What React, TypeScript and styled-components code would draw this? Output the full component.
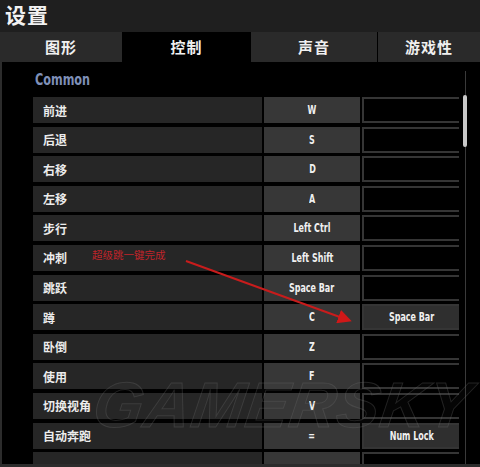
import React from 'react';
import styled, { createGlobalStyle } from 'styled-components';

const GlobalStyle = createGlobalStyle`
  html, body {
    margin: 0;
    padding: 0;
    background: #000;
  }
  * {
    box-sizing: border-box;
  }
`;

const CJK = `"Noto Sans CJK SC", "Noto Sans", sans-serif`;
const COND = `"DejaVu Sans Condensed", "DejaVu Sans", "Liberation Sans", sans-serif`;

const Window = styled.div`
  width: 480px;
  height: 467px;
  display: flex;
  flex-direction: column;
  background: #000;
  overflow: hidden;
`;

const TitleBar = styled.div`
  height: 32px;
  background: #1f1f1f;
  display: flex;
  align-items: center;
  padding: 0 0 5px 5px;
`;

const Title = styled.h1`
  margin: 0;
  font-family: ${CJK};
  font-weight: 700;
  font-size: 21px;
  color: #f2f2f2;
  letter-spacing: 1px;
`;

const TabBar = styled.div`
  height: 30px;
  display: grid;
  grid-template-columns: 122px 127px 126px 1fr;
  column-gap: 1px;
  background: #000;
`;

const Tab = styled.div<{ $active?: boolean }>`
  display: flex;
  align-items: center;
  justify-content: center;
  background: ${(p) => (p.$active ? '#000' : '#2a2a2a')};
  color: #f0f0f0;
  font-family: ${CJK};
  font-weight: 700;
  font-size: 15px;
  letter-spacing: 1px;
  padding-bottom: 2px;
`;

const Content = styled.div`
  position: relative;
  flex: 1;
  display: flex;
  flex-direction: column;
  border-left: 2px solid #2c2c2c;
  border-bottom: 3px solid #2c2c2c;
  padding-left: 31px;
  overflow: hidden;
`;

const SectionTitle = styled.div`
  height: 35px;
  display: flex;
  align-items: center;
  padding-left: 2px;
  padding-bottom: 1px;
`;

const Condensed = styled.span<{ $scale?: number }>`
  display: inline-block;
  font-family: ${COND};
  font-stretch: condensed;
  font-weight: 700;
  transform: scaleX(${(p) => p.$scale ?? 0.74});
  transform-origin: center;
  white-space: nowrap;
`;

const SectionText = styled(Condensed)`
  font-size: 16px;
  color: #7f90b8;
  transform-origin: left center;
`;

const Body = styled.div`
  flex: 1;
  display: flex;
  gap: 4px;
  min-height: 0;
`;

const List = styled.div`
  width: 426px;
  display: flex;
  flex-direction: column;
  gap: 3.6px;
  overflow: hidden;
`;

const Row = styled.div`
  flex: 0 0 26px;
  display: grid;
  grid-template-columns: 229px 96px 99px;
  column-gap: 2px;
`;

const Label = styled.div`
  background: #262626;
  display: flex;
  align-items: center;
  padding-left: 10px;
  font-family: ${CJK};
  font-weight: 700;
  font-size: 12px;
  color: #ececec;
`;

const Key = styled.div<{ $empty?: boolean; $framed?: boolean }>`
  display: flex;
  align-items: center;
  justify-content: center;
  background: ${(p) => (p.$empty ? '#000' : p.$framed ? '#2f2f2f' : '#373737')};
  border: ${(p) => (p.$framed ? '2px solid #353535' : 'none')};
  color: #f0f0f0;
  font-size: 12px;
`;

const ScrollTrack = styled.div`
  position: relative;
  width: 4px;
  margin-top: -26px;
  display: flex;
  justify-content: center;
  &::before {
    content: '';
    width: 1px;
    height: 100%;
    background: #3a3a3a;
  }
`;

const ScrollThumb = styled.div`
  position: absolute;
  top: 24px;
  left: 0;
  width: 4px;
  height: 52px;
  border-radius: 2px;
  background: #c9c9c9;
`;

const Overlay = styled.svg`
  position: absolute;
  left: 0;
  top: 0;
  pointer-events: none;
`;

const Note = styled.div`
  position: absolute;
  left: 90px;
  top: 185px;
  font-family: ${CJK};
  font-size: 10.5px;
  color: #c0242a;
`;

const Watermark = styled.div`
  position: absolute;
  left: 92px;
  top: 306px;
  font-family: "Liberation Sans", sans-serif;
  font-weight: 700;
  font-style: italic;
  font-size: 64px;
  letter-spacing: 1px;
  color: rgba(255, 255, 255, 0.02);
  -webkit-text-stroke: 1px rgba(110, 110, 110, 0.3);
  transform: skewX(-8deg);
  pointer-events: none;
`;

const rows: { label: string; key: string; alt?: string }[] = [
  { label: '前进', key: 'W' },
  { label: '后退', key: 'S' },
  { label: '右移', key: 'D' },
  { label: '左移', key: 'A' },
  { label: '步行', key: 'Left Ctrl' },
  { label: '冲刺', key: 'Left Shift' },
  { label: '跳跃', key: 'Space Bar' },
  { label: '蹲', key: 'C', alt: 'Space Bar' },
  { label: '卧倒', key: 'Z' },
  { label: '使用', key: 'F' },
  { label: '切换视角', key: 'V' },
  { label: '自动奔跑', key: '=', alt: 'Num Lock' },
  { label: '', key: '' },
];

const tabs = ['图形', '控制', '声音', '游戏性'];

export default function App() {
  return (
    <>
      <GlobalStyle />
      <Window>
        <TitleBar>
          <Title>设置</Title>
        </TitleBar>
        <TabBar>
          {tabs.map((t, i) => (
            <Tab key={t} $active={i === 1}>
              {t}
            </Tab>
          ))}
        </TabBar>
        <Content>
          <SectionTitle>
            <SectionText $scale={0.78}>Common</SectionText>
          </SectionTitle>
          <Body>
            <List>
              {rows.map((r, i) => (
                <Row key={i}>
                  <Label>{r.label}</Label>
                  <Key>{r.key && <Condensed>{r.key}</Condensed>}</Key>
                  <Key $framed $empty={!r.alt}>
                    {r.alt && <Condensed>{r.alt}</Condensed>}
                  </Key>
                </Row>
              ))}
            </List>
            <ScrollTrack>
              <ScrollThumb />
            </ScrollTrack>
          </Body>
          <Watermark>GAMERSKY</Watermark>
          <Note>超级跳一键完成</Note>
          <Overlay width="480" height="405" viewBox="0 0 480 405">
            <defs>
              <marker id="head" markerWidth="7" markerHeight="7" refX="5" refY="3.5" orient="auto">
                <path d="M0,0 L7,3.5 L0,7 Z" fill="#d01818" />
              </marker>
            </defs>
            <line
              x1="184"
              y1="199"
              x2="346"
              y2="258"
              stroke="#c81c1c"
              strokeWidth="2"
              markerEnd="url(#head)"
            />
          </Overlay>
        </Content>
      </Window>
    </>
  );
}
